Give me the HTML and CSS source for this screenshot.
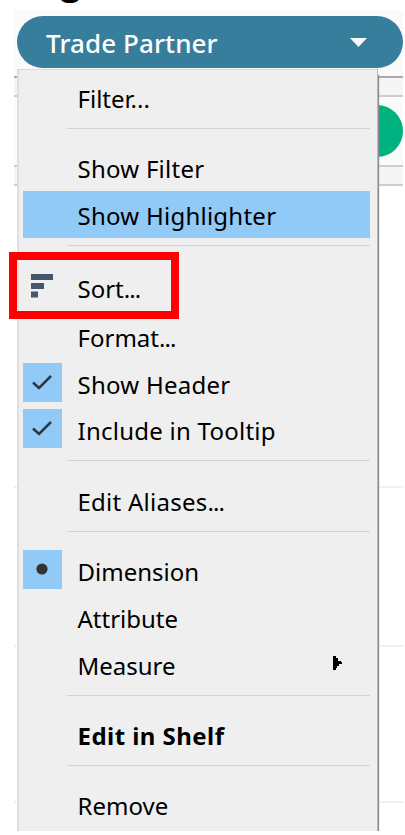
FILE: index.html
```html
<!DOCTYPE html>
<html lang="en">
<head>
<meta charset="utf-8">
<title>Trade Partner menu</title>
<link rel="stylesheet" href="styles.css">
</head>
<body>
<div class="page">
  <div class="heading"><span>g</span></div>
  <div class="sheet">
    <div class="shelf first"><div class="pill"><span class="pill-name">Trade Partner</span><svg width="17" height="9" viewBox="0 0 17 9"><path d="M0 0H17L8.5 9Z" fill="#f5f9fc"/></svg></div></div>
    <div class="gutter"></div>
    <div class="shelf second"><div class="pill green"></div></div>
    <div class="gutter lower"></div>
    <div class="band tall"></div>
    <div class="band"></div>
    <div class="band short"></div>
  </div>
  <div class="menu">
    <div class="row"><span class="label w-filter">Filter...</span></div>
    <div class="sep"></div>
    <div class="row"><span class="label loose">Show Filter</span></div>
    <div class="row active"><span class="label loose">Show Highlighter</span></div>
    <div class="sep wide"></div>
    <div class="row sort"><span class="mark"><svg width="22" height="24" viewBox="0 0 22 24"><path d="M0 0H22V6H0ZM0 9H13V15H0ZM0 17.500H7V23.500H0Z" fill="#46566b"/></svg></span><span class="label">Sort<span class="dots">...</span></span></div>
    <div class="row"><span class="label">Format<span class="dots">...</span></span></div>
    <div class="row"><span class="mark on"><svg width="20" height="15" viewBox="0 0 20 15"><path d="M1 7.500L7 13L19 1" fill="none" stroke="#2b3947" stroke-width="2.500"/></svg></span><span class="label loose">Show Header</span></div>
    <div class="row snug"><span class="mark on"><svg width="20" height="15" viewBox="0 0 20 15"><path d="M1 7.500L7 13L19 1" fill="none" stroke="#2b3947" stroke-width="2.500"/></svg></span><span class="label loose">Include in Tooltip</span></div>
    <div class="sep"></div>
    <div class="row"><span class="label loose">Edit Aliases<span class="dots">...</span></span></div>
    <div class="sep"></div>
    <div class="row"><span class="mark on"><svg width="12" height="12" viewBox="0 0 12 12"><circle cx="6" cy="6" r="5.600" fill="#333"/></svg></span><span class="label">Dimension</span></div>
    <div class="row"><span class="label">Attribute</span></div>
    <div class="row"><span class="label">Measure</span><svg class="arrow" width="9" height="14" viewBox="0 0 9 14"><path d="M0 0H3V2H5V5H8V6H9V8H6V10H4V12H3V14H0Z"/></svg></div>
    <div class="sep"></div>
    <div class="row"><span class="label bold">Edit in Shelf</span></div>
    <div class="sep"></div>
    <div class="row"><span class="label">Remove</span></div>
  </div>
  <div class="callout"></div>
</div>
</body>
</html>
```
FILE: styles.css
```css
* { box-sizing: border-box; }
body { margin: 0; background: #fff; }
.page { position: relative; width: 405px; height: 835px; overflow: hidden; font-family: "Noto Sans", sans-serif; }
.heading { height: 11px; overflow: hidden; position: relative; }
.heading span { position: absolute; left: 57px; bottom: 10px; font: bold 44px/1 "Liberation Sans", sans-serif; color: #000; }
.sheet { margin-left: 14px; width: 389px; }
.shelf { background: #fafafa; }
.first { height: 65px; padding: 5px 0 0 3px; }
.pill { width: 386px; height: 52px; border-radius: 26px; background: #377e9c; display: flex; align-items: center; justify-content: space-between; padding: 0 36px 0 29px; }
.pill-name { color: #fff; font-size: 26px; font-weight: 500; line-height: 52px; letter-spacing: 0.1px; white-space: nowrap; position: relative; top: 1px; }
.gutter { height: 21px; background: #f5f5f5; border-top: 2px solid #a9a9a9; border-bottom: 2px solid #cdcdcd; }
.second { height: 68px; padding: 8px 0 0 3px; }
.green { background: #00b180; }
.lower { border-top-color: #cdcdcd; }
.band { height: 159px; border-bottom: 2px solid #f0f0f0; }
.tall { height: 302px; }
.short { height: 156px; }
.menu { position: absolute; left: 17px; top: 69px; width: 361px; height: 762px; background: #efefef; border: solid; border-width: 1px 1px 0 2px; border-color: #d7dadb #b8b8b8 #aaa #dedfe0; padding: 4px 7px 0 4px; box-shadow: 1px 6px 1px #8c8c8c; clip-path: inset(0 -4px 0 0); }
.row { height: 47px; display: flex; align-items: center; position: relative; padding-left: 55px; }
.active { background: #91c9f7; }
.sort { height: 49px; padding-bottom: 2px; }
.snug { height: 46px; padding-bottom: 1px; }
.label { font-size: 24px; line-height: 45px; color: #000; white-space: nowrap; position: relative; top: 1px; left: -0.500px; }
.loose { letter-spacing: 0.250px; }
.dots { letter-spacing: -0.900px; }
.bold { font-weight: 700; letter-spacing: 0.450px; }
.sep { height: 23.250px; padding-top: 7px; margin-left: 44px; }
.sep::before { content: ""; display: block; height: 1px; background: #d2d5d7; }
.wide { height: 26px; }
.mark { width: 39px; height: 39px; flex: none; margin: -2px 16px 0 -55px; padding: 0 1px 1px 0; display: flex; align-items: center; justify-content: center; }
.on { background: #91c9f7; }
.arrow { position: absolute; right: 28px; top: 15px; }
.callout { position: absolute; left: 9px; top: 252px; width: 170px; height: 67px; border: 8px solid #f00; }
```
